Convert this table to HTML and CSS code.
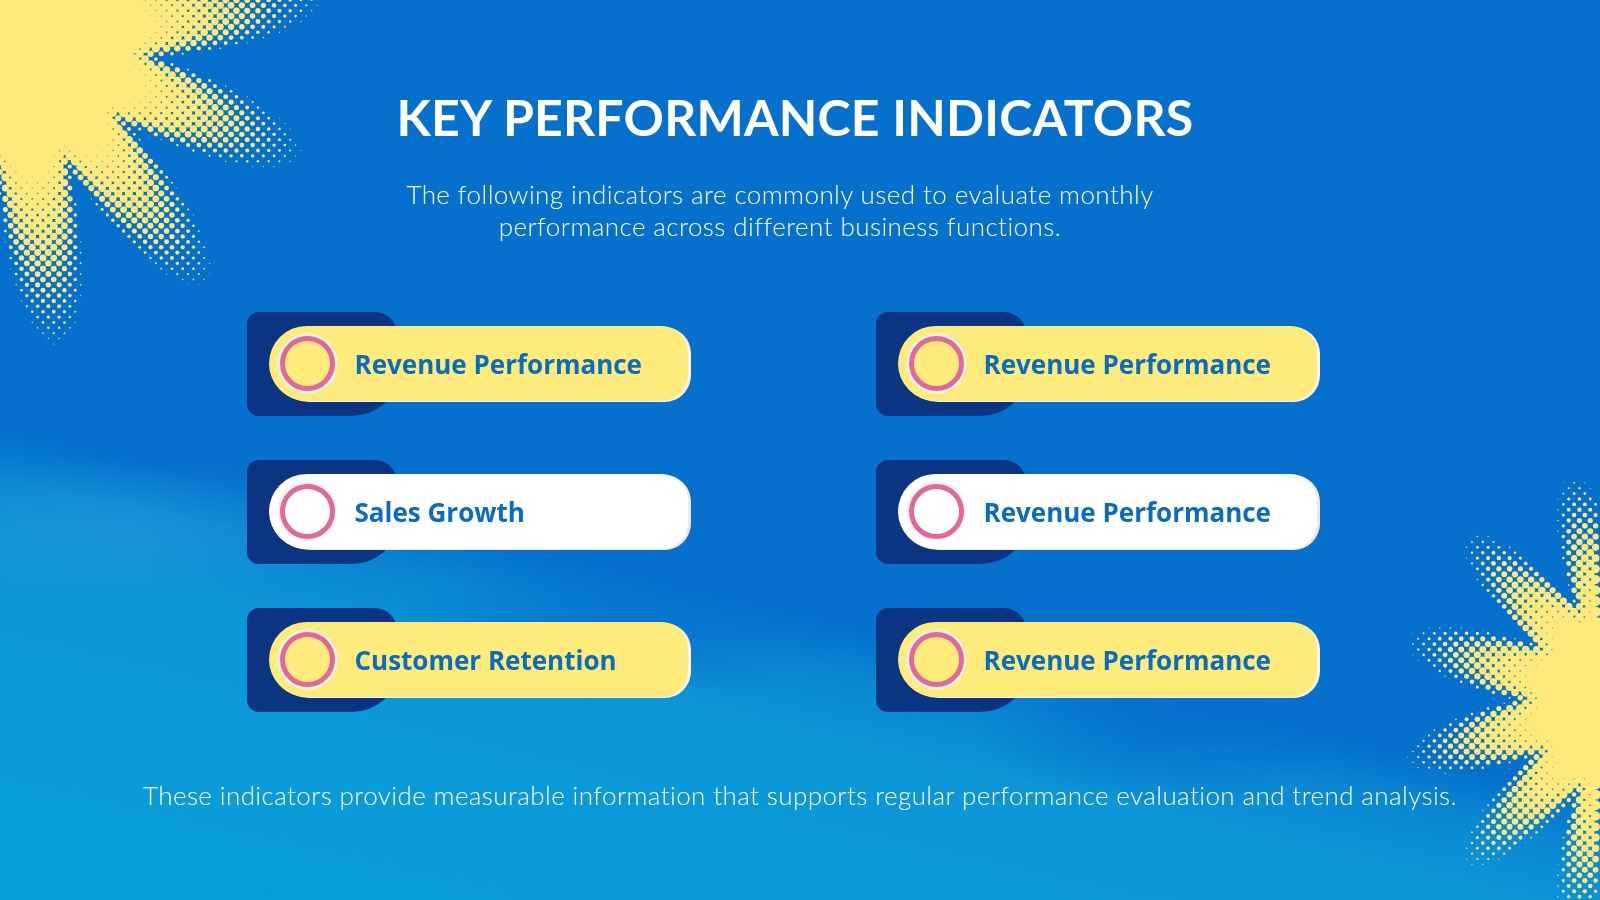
FILE: index.html
```html
<!DOCTYPE html>
<html lang="en">
<head>
<meta charset="utf-8">
<title>Key Performance Indicators</title>
<link rel="stylesheet" href="styles.css">
</head>
<body>
<main class="slide">
  <canvas class="halftone" id="halftone" width="1600" height="900" aria-hidden="true"></canvas>
  <div class="content">
    <h1 class="title">KEY PERFORMANCE INDICATORS</h1>
    <p class="lead">The following indicators are commonly used to evaluate monthly<br>performance across different business functions.</p>
    <ul class="kpi-grid">
      <li class="kpi kpi--yellow"><span class="kpi-back"></span><div class="kpi-pill"><span class="ring"></span><span class="label">Revenue Performance</span></div></li>
      <li class="kpi kpi--yellow"><span class="kpi-back"></span><div class="kpi-pill"><span class="ring"></span><span class="label">Revenue Performance</span></div></li>
      <li class="kpi kpi--white"><span class="kpi-back"></span><div class="kpi-pill"><span class="ring"></span><span class="label">Sales Growth</span></div></li>
      <li class="kpi kpi--white"><span class="kpi-back"></span><div class="kpi-pill"><span class="ring"></span><span class="label">Revenue Performance</span></div></li>
      <li class="kpi kpi--yellow"><span class="kpi-back"></span><div class="kpi-pill"><span class="ring"></span><span class="label">Customer Retention</span></div></li>
      <li class="kpi kpi--yellow"><span class="kpi-back"></span><div class="kpi-pill"><span class="ring"></span><span class="label">Revenue Performance</span></div></li>
    </ul>
    <p class="footnote">These indicators provide measurable information that supports regular performance evaluation and trend analysis.</p>
  </div>
</main>
<script src="script.js"></script>
</body>
</html>
```

FILE: styles.css
```css
* { box-sizing: border-box; }

html, body {
  margin: 0;
  padding: 0;
  background: #0571cc;
}

.slide {
  position: relative;
  width: 1600px;
  height: 900px;
  overflow: hidden;
  font-family: "Lato", "Liberation Sans", sans-serif;
  color: #ffffff;
  background:
    radial-gradient(ellipse 240px 70px at 620px 630px, rgba(6, 112, 204, 0.8), rgba(6, 112, 204, 0) 100%),
    radial-gradient(ellipse 200px 80px at 1170px 725px, rgba(6, 112, 204, 0.85), rgba(6, 112, 204, 0) 100%),
    radial-gradient(ellipse 260px 70px at 110px 530px, rgba(44, 154, 224, 0.5), rgba(44, 154, 224, 0) 100%),
    linear-gradient(193deg, #0571cc 0%, #0571cc 63%, #0a88d3 67%, #0c95d7 72%, #0a9bd9 84%, #089fda 100%);
}

.halftone {
  position: absolute;
  left: 0;
  top: 0;
  width: 1600px;
  height: 900px;
  z-index: 0;
  pointer-events: none;
}

.content {
  position: relative;
  z-index: 1;
  display: flex;
  flex-direction: column;
  padding-top: 92px;
}

.title {
  margin: 0;
  padding-right: 10px;
  font-size: 50px;
  line-height: 1;
  font-weight: 700;
  text-align: center;
  letter-spacing: 0.2px;
}

.lead {
  margin: 36px 0 0;
  padding-right: 40px;
  font-size: 26px;
  line-height: 32px;
  font-weight: 300;
  letter-spacing: 0.42px;
  text-align: center;
}

.kpi-grid {
  list-style: none;
  margin: 70px 0 0 247px;
  padding: 0;
  display: grid;
  grid-template-columns: 445px 445px;
  column-gap: 184px;
  row-gap: 44px;
}

.kpi {
  display: grid;
  width: 445px;
  height: 104px;
}

.kpi--yellow { --pill: #fdeb7c; --lip: #fbf3e4; }
.kpi--white { --pill: #ffffff; --lip: #f3e6ee; }

.kpi-back {
  grid-area: 1 / 1;
  width: 150px;
  height: 104px;
  background: #0b3583;
  border-radius: 12px 22px 46px 12px / 12px 22px 40px 12px;
}

.kpi-pill {
  grid-area: 1 / 1;
  align-self: start;
  margin: 14px 0 0 22px;
  width: 419px;
  height: 75px;
  display: flex;
  align-items: center;
  gap: 20px;
  padding-left: 10.5px;
  background: var(--pill);
  border-radius: 38px 27px 27px 38px;
  box-shadow: 3px 1px 0 var(--lip);
}

.ring {
  flex: none;
  width: 55px;
  height: 55px;
  border-radius: 50%;
  border: 5.5px solid #e0699a;
  background: var(--pill);
  box-shadow: 0 0 0 2.5px #fdf2f2;
}

.label {
  font-family: "Open Sans", "Lato", sans-serif;
  font-size: 26px;
  font-weight: 700;
  color: #0a6cc1;
  white-space: nowrap;
}

.footnote {
  margin: 67px 0 0;
  font-size: 26px;
  line-height: 32px;
  font-weight: 300;
  letter-spacing: 0.4px;
  text-align: center;
}
```

FILE: script.js
```js
(function () {
  var canvas = document.getElementById('halftone');
  var ctx = canvas.getContext('2d');
  ctx.fillStyle = '#fdea7a';

  function sun(o) {
    var step = 7.6;
    var rowH = step / Math.SQRT2;
    var colW = step * Math.SQRT2;
    var rmax = 5.8;
    ctx.beginPath();
    ctx.arc(o.cx, o.cy, o.core, 0, Math.PI * 2);
    ctx.fill();
    var reach = o.core + o.halo + o.ray + 10;
    var y0 = Math.max(0, o.cy - reach), y1 = Math.min(900, o.cy + reach);
    var x0 = Math.max(0, o.cx - reach), x1 = Math.min(1600, o.cx + reach);
    for (var j = 0; y0 + j * rowH <= y1; j++) {
      var y = y0 + j * rowH;
      var off = (j % 2) * colW / 2;
      for (var x = x0 + off; x <= x1; x += colW) {
        var dx = x - o.cx, dy = y - o.cy;
        var d = Math.sqrt(dx * dx + dy * dy);
        if (d < o.core - 8) continue;
        var th = Math.atan2(dy, dx);
        var k = Math.pow((1 + Math.cos(o.n * (th - o.t0))) / 2, o.p);
        var B = o.core + o.halo + o.ray * k;
        var v = 1 - (d - o.core + 8) / (B - o.core + 8);
        if (v <= 0) continue;
        var r = rmax * Math.pow(v, 0.68);
        if (r < 0.45) continue;
        ctx.beginPath();
        ctx.arc(x, y, r, 0, Math.PI * 2);
        ctx.fill();
      }
    }
  }

  var deg = Math.PI / 180;
  sun({ cx: 15, cy: 40, core: 115, ray: 170, halo: 28, n: 12, t0: 22 * deg, p: 0.6 });
  sun({ cx: 1630, cy: 700, core: 88, ray: 118, halo: 28, n: 12, t0: 15 * deg, p: 0.6 });
})();
```
